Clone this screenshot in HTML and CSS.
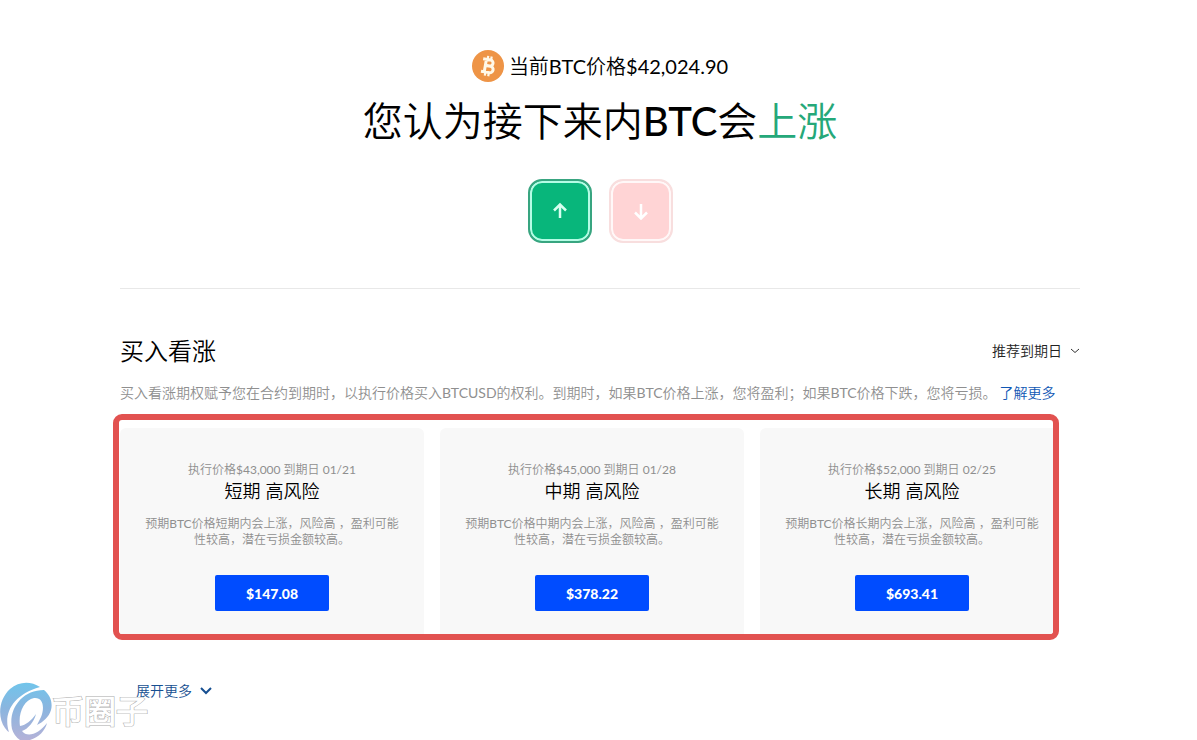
FILE: index.html
```html
<!DOCTYPE html>
<html lang="zh-CN">
<head>
<meta charset="utf-8">
<title>BTC 期权</title>
<link rel="stylesheet" href="styles.css">
</head>
<body>
<main class="page">
  <header class="hero">
    <p class="price">
      <svg class="coin" viewBox="0 0 32 32" aria-hidden="true">
        <circle cx="16" cy="16" r="16" fill="#ee9446"/>
        <g transform="rotate(10 16 16)" fill="none" stroke="#fff8e8" stroke-width="3">
          <path d="M10 9.700H17.500a3 3 0 0 1 0 6H13.500M13.500 15.900H18.500a3.200 3.200 0 0 1 0 6.400H10M13.300 9.700V22.300"/>
          <path stroke-width="2.200" d="M14.500 6V9.500M18 6V9.500M14.500 22.500V26M18 22.500V26"/>
        </g>
      </svg>
      <span>当前BTC价格$42,024.90</span>
    </p>
    <h1 class="question">您认为接下来内<span class="ticker">BTC</span>会<span class="rise">上涨</span></h1>
    <div class="choices">
      <button class="choice choice-up" type="button" aria-label="上涨">
        <svg class="arrow" viewBox="0 0 16 18"><path d="M8 16V3M2 8.500 8 2.500 14 8.500"/></svg>
      </button>
      <button class="choice choice-down" type="button" aria-label="下跌">
        <svg class="arrow" viewBox="0 0 16 18"><path d="M8 2V16M2 10.500 8 16.500 14 10.500"/></svg>
      </button>
    </div>
  </header>

  <section class="options">
    <div class="heading">
      <h2 class="title">买入看涨</h2>
      <button class="expiry" type="button">推荐到期日
        <svg class="chevron-small" viewBox="0 0 10 6"><path d="M1 1 5 4.500 9 1"/></svg>
      </button>
    </div>
    <p class="intro">买入看涨期权赋予您在合约到期时，以执行价格买入BTCUSD的权利。到期时，如果BTC价格上涨，您将盈利；如果BTC价格下跌，您将亏损。<a class="learn" href="#">了解更多</a></p>

    <div class="frame">
      <div class="cards">
        <article class="card">
          <p class="strike">执行价格$43,000 到期日 01/21</p>
          <h3 class="term">短期 高风险</h3>
          <p class="detail">预期BTC价格短期内会上涨，风险高 ，盈利可能性较高，潜在亏损金额较高。</p>
          <button class="buy" type="button">$147.08</button>
        </article>
        <article class="card">
          <p class="strike">执行价格$45,000 到期日 01/28</p>
          <h3 class="term">中期 高风险</h3>
          <p class="detail">预期BTC价格中期内会上涨，风险高 ，盈利可能性较高，潜在亏损金额较高。</p>
          <button class="buy" type="button">$378.22</button>
        </article>
        <article class="card">
          <p class="strike">执行价格$52,000 到期日 02/25</p>
          <h3 class="term">长期 高风险</h3>
          <p class="detail">预期BTC价格长期内会上涨，风险高 ，盈利可能性较高，潜在亏损金额较高。</p>
          <button class="buy" type="button">$693.41</button>
        </article>
      </div>
    </div>

    <button class="more" type="button">展开更多
      <svg class="chevron" viewBox="0 0 12 8"><path d="M1 1 6 6 11 1"/></svg>
    </button>
  </section>

  <div class="watermark">
    <svg class="mark" viewBox="0 0 52 58" aria-hidden="true">
      <defs>
        <linearGradient id="tint" gradientUnits="userSpaceOnUse" x1="0" y1="0" x2="0" y2="58">
          <stop offset="0" stop-color="#70c5eb"/>
          <stop offset=".45" stop-color="#8ab5df"/>
          <stop offset="1" stop-color="#b4b2d8"/>
        </linearGradient>
      </defs>
      <path fill="url(#tint)" d="M40 5C31-1 19-1 10 7C-1 17-3 35 5 46Q7 49 9 50C3 32 12 13 40 5Z"/>
      <path fill="url(#tint)" d="M44 8C22 8 8 27 12 47Q14 54 20 58H30C39 55 45 49 47 41C39 52 27 56 22 49C28 47 34 40 36 32C31 39 26 43 20 44C18 31 24 18 34 16C43 15 45 25 41 35Q39 39 37 43C43 40 49 35 51 28C53 20 50 13 44 8Z"/>
    </svg>
    <span class="brand">币圈子</span>
  </div>
</main>
</body>
</html>
```

FILE: styles.css
```css
* { box-sizing: border-box; }
body {
  margin: 0;
  background: #fff;
  color: #000;
  font-family: Lato, "Noto Sans CJK SC DemiLight", "Noto Sans CJK SC", sans-serif;
  font-weight: 400;
}
h1, h2, h3, p { margin: 0; font-weight: inherit; }
button {
  border: 0;
  padding: 0;
  background: none;
  font: inherit;
  cursor: pointer;
}
svg { display: block; fill: none; flex: none; }
.page {
  position: relative;
  min-height: 100vh;
  padding: 50px 117px 0 120px;
}
.hero {
  display: flex;
  flex-direction: column;
  align-items: center;
  padding-bottom: 45px;
  border-bottom: 1px solid #e8e8e8;
}
.price {
  display: flex;
  align-items: center;
  gap: 5px;
  font-size: 20px;
  line-height: 32px;
}
.coin { width: 32px; height: 32px; }
.question {
  margin-top: 11px;
  font-size: 40px;
  font-weight: 350;
  line-height: 56px;
}
.ticker { font-weight: 500; }
.rise { color: #25a879; }
.choices {
  display: flex;
  gap: 17px;
  margin-top: 30px;
}
.choice {
  display: grid;
  place-items: center;
  width: 64px;
  height: 64px;
  border-radius: 14px;
}
.choice-up {
  border: 2px solid #38a580;
  background: #08b67b;
  box-shadow: inset 0 0 0 2px #b5fce5;
  color: #d6fff0;
}
.choice-down {
  border: 2px solid #f8dede;
  background: #ffd4d5;
  box-shadow: inset 0 0 0 2px #fff8f8;
  color: #fff;
}
.arrow { width: 16px; height: 18px; stroke: currentColor; stroke-width: 2.5; }
.heading {
  display: flex;
  align-items: center;
  justify-content: space-between;
  margin-top: 44px;
}
.title { font-size: 24px; font-weight: 350; line-height: 36px; }
.expiry {
  display: flex;
  align-items: center;
  gap: 8px;
  color: #222;
  font-size: 14px;
  font-weight: 350;
  line-height: 20px;
}
.chevron-small { width: 10px; height: 6px; stroke: #333; }
.intro {
  margin-top: 14px;
  color: #8f8f8f;
  font-size: 14px;
  line-height: 20px;
}
.learn {
  margin-left: 3px;
  color: #1058b5;
  font-weight: 350;
  text-decoration: none;
}
.frame {
  margin: 11px 21px 0 -7px;
  overflow: hidden;
  border: 6px solid #e25250;
  border-radius: 9px;
  padding: 8px 0 0 1px;
}
.cards {
  display: grid;
  grid-template-columns: repeat(3, 1fr);
  gap: 16px;
  margin-right: -11px;
}
.card {
  display: flex;
  flex-direction: column;
  align-items: center;
  padding: 34px 24px 23px;
  border-radius: 6px 6px 0 0;
  background: #f8f8f8;
  text-align: center;
}
.strike { color: #8f8f8f; font-size: 12px; line-height: 16px; }
.term { font-size: 18px; font-weight: 350; line-height: 26px; }
.detail { margin-top: 12px; color: #8f8f8f; font-size: 12px; line-height: 16px; }
.buy {
  width: 114px;
  height: 36px;
  margin-top: 27px;
  border-radius: 2px;
  background: #004cff;
  color: #fff;
  font-size: 14px;
  font-weight: 900;
}
.more {
  display: flex;
  align-items: center;
  gap: 8px;
  margin: 41px 0 0 16px;
  color: #164f91;
  font-size: 14px;
  font-weight: 350;
  line-height: 20px;
}
.chevron { width: 12px; height: 8px; stroke: #164f91; stroke-width: 2; }
.watermark {
  position: absolute;
  left: 0;
  bottom: 0;
  display: flex;
  align-items: center;
  pointer-events: none;
}
.mark { width: 52px; height: 58px; }
.brand {
  color: #fff;
  font-size: 32px;
  font-weight: 900;
  line-height: 40px;
  -webkit-text-stroke: 1px #aaa;
  paint-order: stroke fill;
}
```
